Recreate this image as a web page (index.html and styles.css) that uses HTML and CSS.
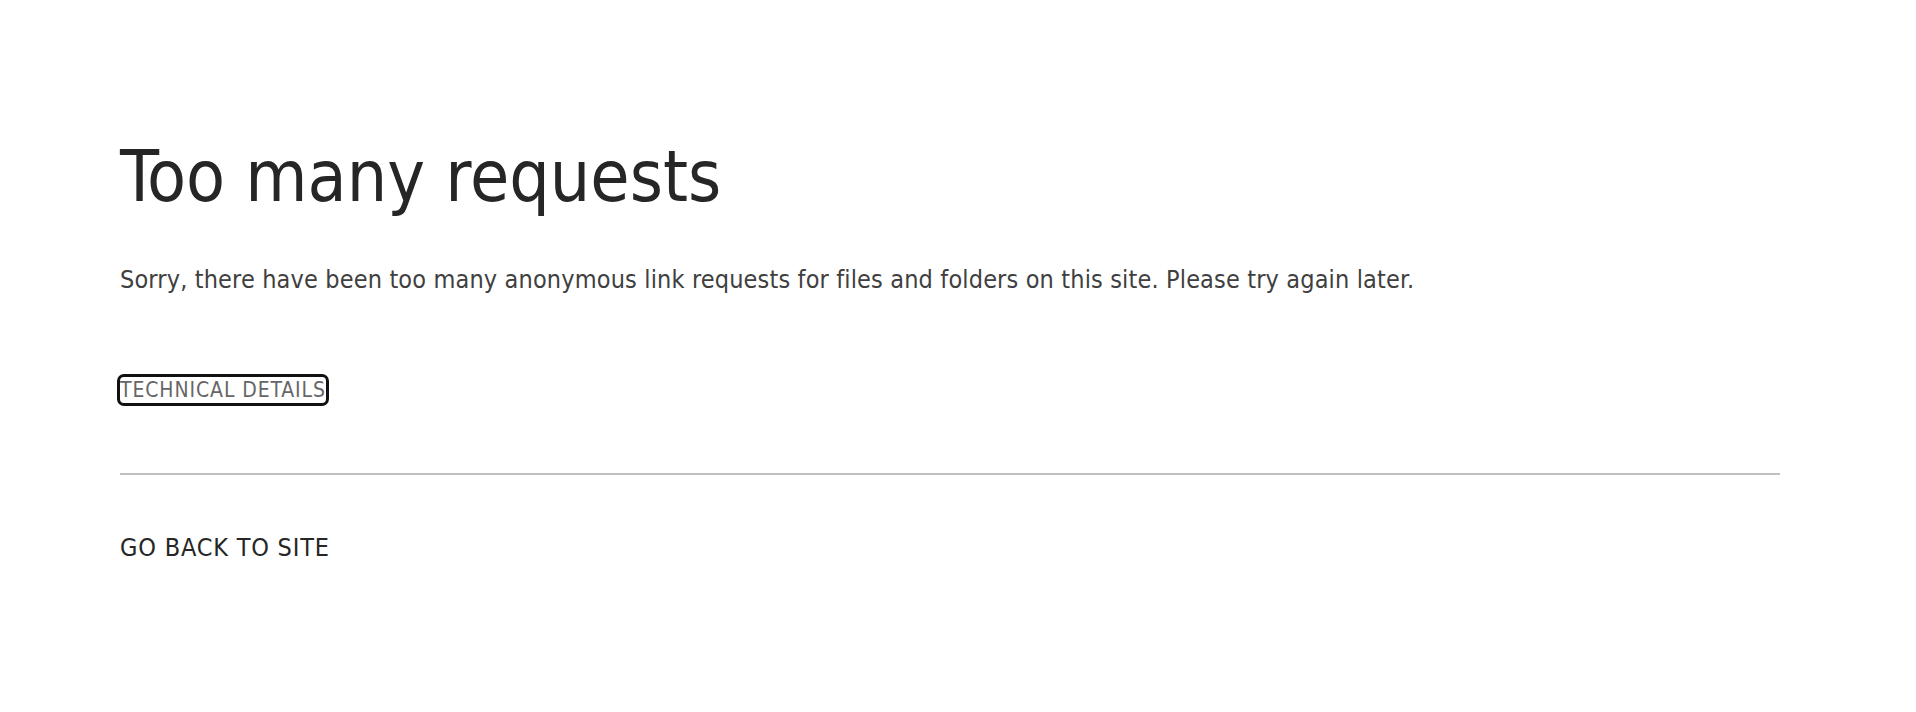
FILE: index.html
```html
<!DOCTYPE html>
<html lang="en">
<head>
<meta charset="utf-8">
<title>Too many requests</title>
<link rel="stylesheet" href="styles.css">
</head>
<body>
<main class="page">
  <h1 class="title">Too many requests</h1>
  <p class="message">Sorry, there have been too many anonymous link requests for files and folders on this site. Please try again later.</p>
  <div class="details-row">
    <button class="details-btn" type="button">TECHNICAL DETAILS</button>
  </div>
  <hr class="divider">
  <a class="back-link" href="#">GO BACK TO SITE</a>
</main>
</body>
</html>
```

FILE: styles.css
```css
html, body {
  margin: 0;
  padding: 0;
  background: #ffffff;
}

body {
  font-family: "DejaVu Sans Condensed", "DejaVu Sans", sans-serif;
  color: #262626;
}

.page {
  padding: 141px 136px 0 120px;
  display: flex;
  flex-direction: column;
  align-items: flex-start;
}

.title {
  margin: 0;
  font-size: 71px;
  line-height: 72px;
  font-weight: normal;
  color: #262626;
}

.message {
  margin: 52px 0 0 0;
  font-size: 25px;
  line-height: 30px;
  letter-spacing: 0.15px;
  color: #404040;
}

.details-row {
  margin-top: 82px;
}

.details-btn {
  font-family: inherit;
  font-size: 21px;
  line-height: 26px;
  height: 26px;
  letter-spacing: 0.9px;
  padding: 0;
  margin: 0;
  border: none;
  background: transparent;
  color: #666666;
  outline: 3px solid #111111;
  border-radius: 4px;
  cursor: pointer;
}

.divider {
  align-self: stretch;
  margin: 70px 0 0 0;
  border: none;
  border-top: 2px solid #c0c0c0;
  height: 0;
}

.back-link {
  margin-top: 58px;
  font-size: 25px;
  line-height: 30px;
  letter-spacing: 0.8px;
  color: #262626;
  text-decoration: none;
}
```
